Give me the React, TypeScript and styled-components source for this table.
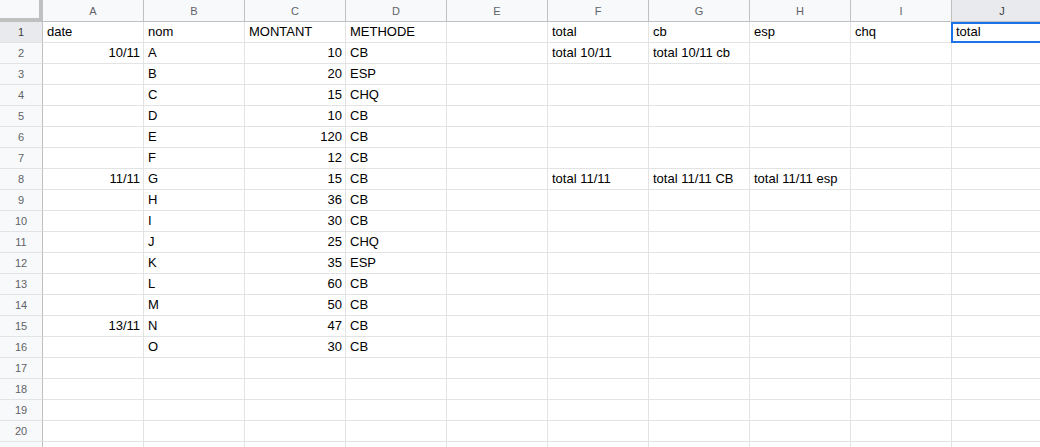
import styled, { createGlobalStyle } from "styled-components";

const GlobalStyle = createGlobalStyle`
  html, body {
    margin: 0;
    padding: 0;
    background: #fff;
    overflow: hidden;
  }
  body {
    font-family: "Liberation Sans", Arial, sans-serif;
  }
`

const COLUMNS = ["A", "B", "C", "D", "E", "F", "G", "H", "I", "J"];

// each row: [A, B, C, D, E, F, G, H, I, J]
const rows: string[][] = [
  ["date", "nom", "MONTANT", "METHODE", "", "total", "cb", "esp", "chq", "total"],
  ["10/11", "A", "10", "CB", "", "total 10/11", "total 10/11 cb"],
  ["", "B", "20", "ESP"],
  ["", "C", "15", "CHQ"],
  ["", "D", "10", "CB"],
  ["", "E", "120", "CB"],
  ["", "F", "12", "CB"],
  ["11/11", "G", "15", "CB", "", "total 11/11", "total 11/11 CB", "total 11/11 esp"],
  ["", "H", "36", "CB"],
  ["", "I", "30", "CB"],
  ["", "J", "25", "CHQ"],
  ["", "K", "35", "ESP"],
  ["", "L", "60", "CB"],
  ["", "M", "50", "CB"],
  ["13/11", "N", "47", "CB"],
  ["", "O", "30", "CB"],
  [], [], [], [],
];

const isNumberish = (v: string) => /^[\d/]+$/.test(v);

function App() {
  return (
    <>
      <GlobalStyle />
      <Sheet>
        <Grid>
          <Corner />
          {COLUMNS.map((c) => (
            <ColHeader key={c} $active={c === "J"}>{c}</ColHeader>
          ))}
          {rows.map((row, r) => (
            <Row key={r}>
              <RowHeader $active={r === 0}>{r + 1}</RowHeader>
              {COLUMNS.map((c, i) => {
                const v = row[i] ?? "";
                return (
                  <Cell
                    key={c}
                    $right={r > 0 && isNumberish(v)}
                    $selected={r === 0 && c === "J"}
                  >
                    {v}
                  </Cell>
                );
              })}
            </Row>
          ))}
          {/* next row, only its top edge shows */}
          <Row>
            <RowHeader />
            {COLUMNS.map((c) => (
              <Cell key={c} />
            ))}
          </Row>
        </Grid>
      </Sheet>
    </>
  );
}

const Sheet = styled.div`
  width: 1040px;
  height: 447px;
  overflow: hidden;
  background: #fff;
`

const Grid = styled.div`
  display: grid;
  grid-template-columns: 43px repeat(10, 101px);
  grid-auto-rows: 21px;
  grid-template-rows: 22px;
  width: max-content;
`

const Row = styled.div`
  display: contents;
`

const Corner = styled.div`
  box-sizing: border-box;
  background: #f8f9fa;
  border-right: 4px solid #c0c0c0;
  border-bottom: 4px solid #c0c0c0;
`

const ColHeader = styled.div<{ $active?: boolean }>`
  box-sizing: border-box;
  display: flex;
  align-items: center;
  justify-content: center;
  background: ${(p) => (p.$active ? "#e8eaed" : "#f8f9fa")};
  border-right: 1px solid #c0c0c0;
  border-bottom: 1px solid #c0c0c0;
  color: ${(p) => (p.$active ? "#3c4043" : "#5f6368")};
  font-size: 11px;
  padding-top: 1px;
`

const RowHeader = styled.div<{ $active?: boolean }>`
  box-sizing: border-box;
  display: flex;
  align-items: center;
  justify-content: center;
  background: ${(p) => (p.$active ? "#e8eaed" : "#f8f9fa")};
  border-right: 1px solid #c0c0c0;
  border-bottom: 1px solid #e2e3e3;
  color: ${(p) => (p.$active ? "#3c4043" : "#5f6368")};
  font-size: 11px;
`

const Cell = styled.div<{ $right?: boolean; $selected?: boolean }>`
  box-sizing: border-box;
  position: relative;
  border-right: 1px solid #e2e3e3;
  border-bottom: 1px solid #e2e3e3;
  padding: 0 3px 0 4px;
  font-size: 13px;
  line-height: 20px;
  color: #000;
  white-space: nowrap;
  overflow: visible;
  text-align: ${(p) => (p.$right ? "right" : "left")};

  &::after {
    content: "";
    display: ${(p) => (p.$selected ? "block" : "none")};
    position: absolute;
    top: 0;
    left: -1px;
    right: -1px;
    bottom: -1px;
    border: 2px solid #1a73e8;
    pointer-events: none;
  }
`

export default App;
